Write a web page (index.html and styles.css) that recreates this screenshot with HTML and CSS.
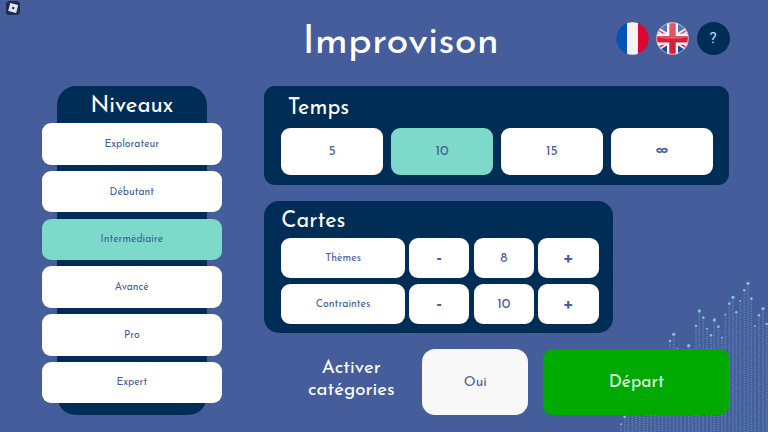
FILE: index.html
```html
<!DOCTYPE html>
<html lang="fr">
<head>
<meta charset="utf-8">
<title>Improvison</title>
<link rel="stylesheet" href="styles.css">
</head>
<body>
<svg class="skyline" id="skyline" width="158" height="162" viewBox="0 0 474 486" aria-hidden="true"></svg>
<svg class="badge" viewBox="0 0 14 14" aria-hidden="true"><rect width="14" height="14" rx="3.5" fill="#1d2c50"/><path d="M4.2 2 12.2 4 10.2 12 2.2 10Z" fill="#dfe6f0"/><path d="M6.4 5.7 8.5 6.2 8 8.2 5.9 7.7Z" fill="#1d2c50"/></svg>
<header class="header">
  <h1 class="title">Improvison</h1>
  <nav class="langs">
    <svg class="flag" viewBox="0 0 33 33"><defs><clipPath id="disc"><circle cx="16.5" cy="16.5" r="16.2"/></clipPath></defs><g clip-path="url(#disc)"><path fill="#0554b4" d="M0 0h11v33H0z"/><path fill="#f3f3f3" d="M11 0h11v33H11z"/><path fill="#dc0630" d="M22 0h11v33H22z"/></g></svg>
    <svg class="flag" viewBox="0 0 33 33"><g clip-path="url(#disc)"><path fill="#214b9c" d="M0 0h33v33H0z"/><path stroke="#f4f1f5" stroke-width="5" d="M-6 3 39 31M39 3-6 31"/><path stroke="#d5283f" stroke-width="1.8" d="M-6 3 39 31M39 3-6 31"/><path stroke="#f7f4f6" stroke-width="11" d="M16.5 0v33M0 17.2h33"/><path stroke="#d91f38" stroke-width="6.4" d="M16.5 0v33M0 17.2h33"/><path fill="#fff" fill-opacity=".24" d="M0 0h33v15Q16 19 0 15z"/></g><circle cx="16.5" cy="16.5" r="15.8" fill="none" stroke="#c5cce2" stroke-width=".8"/></svg>
    <button class="help">?</button>
  </nav>
</header>
<main class="main">
  <section class="levels">
    <h2 class="heading levels-heading">Niveaux</h2>
    <button class="level">Explorateur</button>
    <button class="level">Débutant</button>
    <button class="level active">Intermédiaire</button>
    <button class="level">Avancé</button>
    <button class="level">Pro</button>
    <button class="level">Expert</button>
  </section>
  <div class="settings">
    <section class="panel time">
      <h2 class="heading">Temps</h2>
      <div class="time-row">
        <button>5</button><button class="active">10</button><button>15</button><button class="infinity">∞</button>
      </div>
    </section>
    <section class="panel cards">
      <h2 class="heading">Cartes</h2>
      <div class="cards-grid">
        <span class="name">Thèmes</span><button class="sign">-</button><output>8</output><button class="sign">+</button>
        <span class="name">Contraintes</span><button class="sign">-</button><output>10</output><button class="sign">+</button>
      </div>
    </section>
    <div class="actions">
      <p class="label">Activer<br>catégories</p>
      <button class="yes">Oui</button>
      <button class="start">Départ</button>
    </div>
  </div>
</main>
<script src="skyline.js"></script>
</body>
</html>
```
FILE: styles.css
```css
* { box-sizing: border-box; }
body {
  margin: 0;
  width: 768px;
  height: 432px;
  overflow: hidden;
  position: relative;
  background: #465d9c;
  color: #fff;
  font-family: "Josefin Sans", Lato, sans-serif;
}
h1, h2, p { margin: 0; font-weight: 400; }
button, output, .name {
  display: flex;
  align-items: center;
  justify-content: center;
  padding: 1px 0 0;
  border: 0;
  background: #fff;
  color: #465d9f;
  font-family: inherit;
  font-size: 13.8px;
  line-height: 1;
  border-radius: 9px;
}
.skyline { position: absolute; right: 0; bottom: 0; z-index: -1; }
.badge { position: absolute; left: 6px; top: 1px; width: 14px; height: 14px; }
.header {
  height: 86.3px;
  display: flex;
  justify-content: space-between;
  padding: 21.5px 38.5px 0 302.5px;
}
.title { font-size: 40.2px; line-height: 42px; letter-spacing: 0.1px; white-space: nowrap; }
.langs { display: flex; gap: 7.2px; }
.flag, .help { width: 33px; height: 33px; }
.help { background: #002d56; color: #b5e3e8; border-radius: 50%; font-family: Roboto, sans-serif; font-size: 15px; }
.main { display: flex; padding-left: 57px; gap: 57.6px; }
.levels {
  width: 149.7px;
  height: 328.7px;
  border-radius: 19px;
  background: #002d56;
}
.heading { font-size: 21.8px; line-height: 26px; }
.levels-heading { height: 37px; padding-top: 8px; font-size: 22.4px; text-align: center; }
.level {
  width: 179.6px;
  height: 41.5px;
  margin: 0 0 6.2px -15px;
  padding-top: 2.4px;
  font-size: 10.4px;
}
.settings { width: 465.2px; }
.panel { background: #002d56; }
.time { height: 98.5px; border-radius: 11px; padding: 9px 17px 0; }
.time .heading { height: 33px; padding: 1px 0 0 6.5px; }
.time-row { display: grid; grid-template-columns: repeat(4, 101.8px); column-gap: 8.1px; }
.time-row button { height: 46.5px; }
.active, .time-row .active { background: #7ddaca; }
.time-row .infinity { font-size: 28px; font-weight: 600; padding: 0; }
.cards {
  width: 349px;
  height: 131.7px;
  margin-top: 16.5px;
  border-radius: 15px;
  padding: 7px 0 0 17px;
}
.cards .heading { height: 30px; padding-top: 1px; }
.cards-grid {
  display: grid;
  grid-template-columns: 123.6px repeat(3, 60.5px);
  grid-auto-rows: 40px;
  gap: 6.2px 4.1px;
}
.name { font-size: 10.5px; }
.sign { font-size: 21px; font-weight: 600; }
.actions { display: flex; height: 65.5px; margin-top: 16.4px; }
.label {
  width: 158px;
  padding: 9px 0 0 16px;
  text-align: center;
  font-size: 18.8px;
  line-height: 22px;
}
.yes { width: 106px; margin-right: 15.2px; background: #f8f8f8; border-radius: 13px; }
.start { width: 186px; background: #00aa00; color: #e7f8e4; border-radius: 9px; font-size: 17.4px; }
```
FILE: skyline.js
```js
const columns = [
  [33, 463, 3], [44, 441, 4], [55, 425, 3], [67, 410, 3], [78, 400, 3], [89, 410, 3],
  [101, 390, 3], [112, 370, 3], [123, 385, 3], [135, 350, 3], [146, 330, 3], [157, 310, 3],
  [169, 260, 3], [180, 213, 4], [191, 193, 5], [202, 238, 3], [213, 255, 3], [225, 250, 3],
  [236, 227, 5], [247, 243, 3], [258, 168, 4], [268, 123, 5], [280, 143, 4], [291, 176, 3],
  [303, 196, 4], [313, 150, 5], [325, 170, 4], [336, 203, 3], [346, 134, 3], [358, 101, 4],
  [369, 82, 5], [379, 127, 4], [391, 93, 3], [403, 61, 4], [414, 40, 5], [424, 86, 4],
  [435, 169, 3], [447, 136, 4], [459, 116, 5], [470, 162, 4]
];
document.getElementById("skyline").innerHTML = columns.map(([x, y, r]) =>
  `<path d="M${x} ${y + 8}V486" stroke="#6d9fc0" stroke-opacity=".55" stroke-width="5" stroke-dasharray="4 3"/>` +
  `<circle cx="${x}" cy="${y}" r="${r}" fill="#79c9ca"/>`
).join("");
```
